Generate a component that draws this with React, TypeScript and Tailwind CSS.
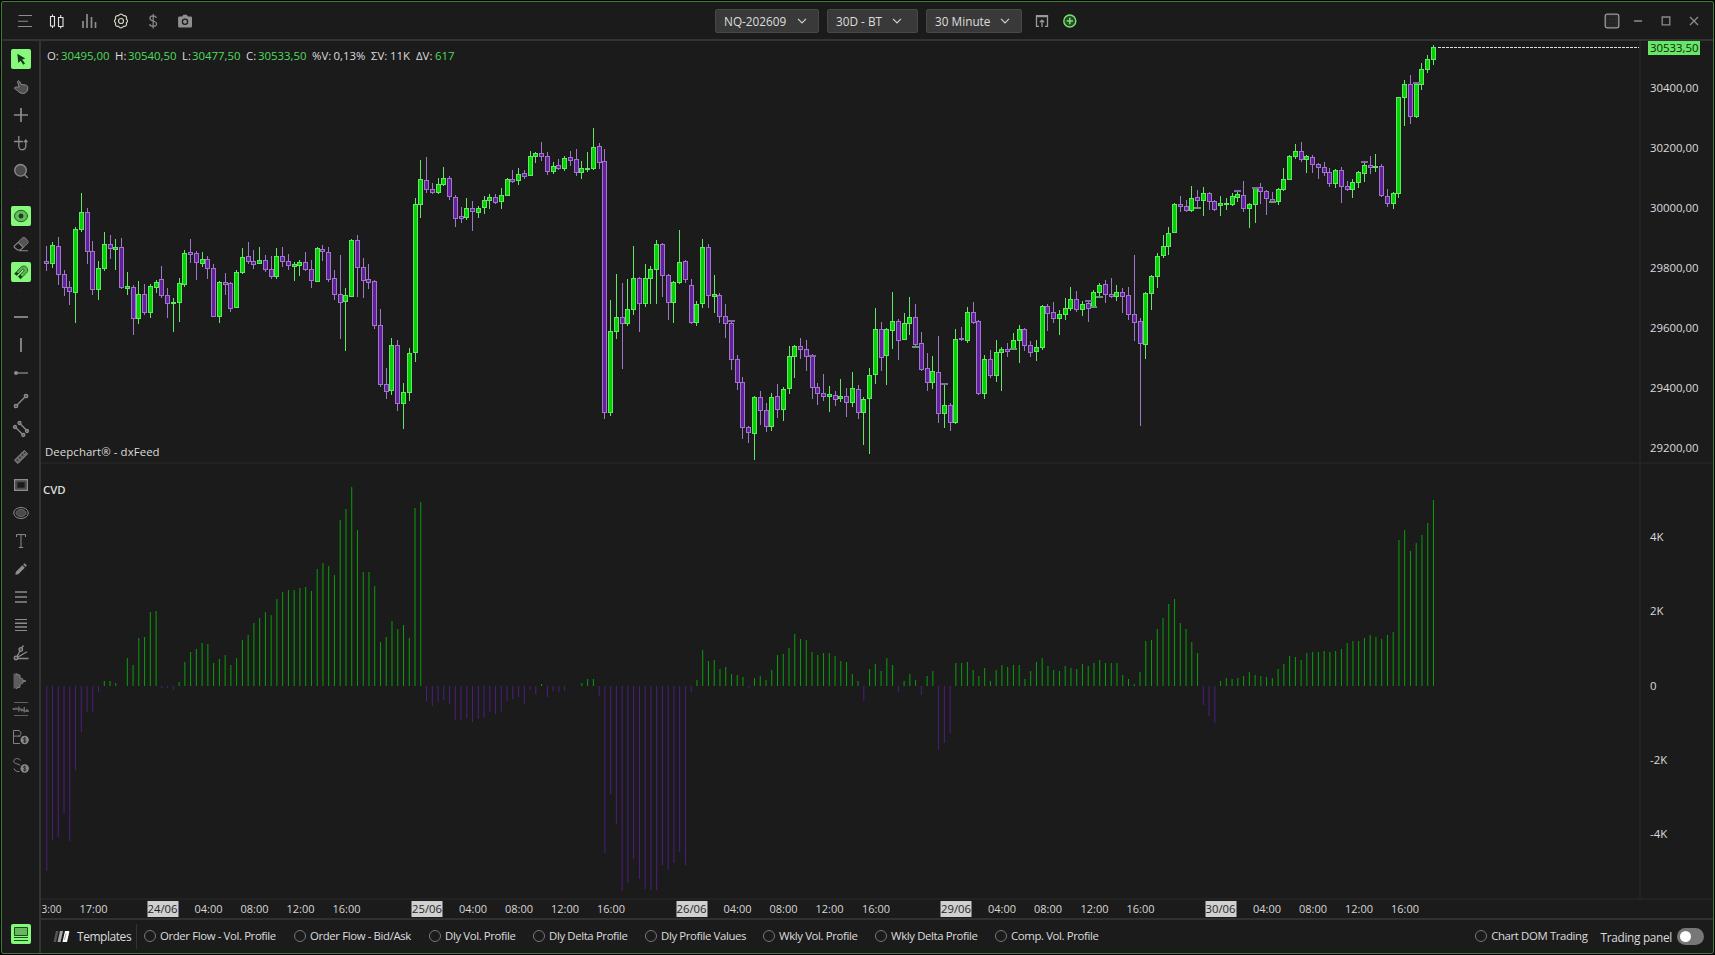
import type { ReactNode } from "react";

const FONT = '"Segoe UI", "Open Sans", "Noto Sans", sans-serif';
const BAR_START = 46.75;
const BAR_STEP = 5.754;
const CVD_ZERO = 686;

// direction, high, body top, body bottom, low (canvas units)
const CANDLES = `
p 246 261 264 271|g 242 245 264 268|p 237 246 275 285|p 270 274 288 296|p 281 287 292 305|g 227 229 293 323
g 193 212 230 232|p 208 212 252 264|p 241 251 290 295|g 261 268 290 300|g 232 244 269 271|p 235 244 249 259
g 239 247 250 270|p 238 247 288 289|g 272 286 289 295|p 285 287 319 335|g 281 294 319 324|p 284 294 313 315
g 284 286 313 318|g 280 282 288 293|p 266 279 296 298|p 288 295 304 318|g 298 302 304 332|g 278 283 303 322
g 250 253 285 287|p 239 252 255 263|p 251 253 263 280|g 252 259 264 267|p 256 259 269 279|p 264 268 317 317
g 281 282 317 323|p 273 282 285 295|p 282 283 309 312|g 270 272 308 308|g 248 257 273 274|p 242 256 262 264
p 250 261 265 269|g 247 260 264 264|p 255 260 270 272|p 256 269 277 279|g 248 256 277 279|p 247 256 262 267
p 254 261 266 270|g 262 264 267 281|g 260 262 266 276|p 252 262 270 271|p 260 269 281 288|g 247 248 282 282
p 245 249 252 261|p 247 252 280 282|p 270 278 295 300|p 255 294 303 339|g 288 295 302 351|g 239 240 297 297
p 235 240 268 297|p 258 267 281 298|p 264 279 283 289|p 280 281 326 329|p 309 325 385 387|p 368 384 392 399
g 338 345 391 395|p 340 345 404 411|g 383 392 404 429|g 348 353 393 401|g 198 204 353 362|g 160 179 205 218
p 157 180 190 193|p 183 189 193 194|g 178 184 193 194|g 167 178 185 186|p 176 178 197 200|p 195 197 219 227
p 207 216 219 223|g 198 208 218 220|p 201 208 212 231|g 206 208 213 218|g 196 200 208 214|g 194 197 201 209
p 194 197 203 204|g 188 195 202 209|g 178 179 196 196|p 170 179 182 183|g 168 174 181 185|p 170 173 177 179
g 151 156 176 176|g 152 153 157 163|p 142 153 157 161|p 152 156 172 175|g 162 166 172 174|p 159 165 169 170
g 156 158 169 171|p 151 157 161 166|p 149 159 173 176|g 161 168 173 179|g 152 168 170 172|g 128 147 169 170
p 143 146 163 169|p 149 161 413 419|g 300 331 413 416|g 274 317 332 339|p 283 317 324 369|g 279 309 324 326
g 246 278 310 315|p 277 278 304 332|g 264 278 304 307|g 266 269 279 304|g 240 244 270 304|p 243 244 276 297
p 274 275 303 320|g 281 282 303 323|g 230 262 283 284|p 260 261 280 283|p 279 285 323 324|g 301 304 323 326
g 239 247 304 308|p 244 247 296 308|g 275 294 297 313|p 293 295 317 323|p 304 316 324 338|p 320 323 360 370
p 355 359 383 390|p 377 382 428 439|p 426 427 433 443|g 396 397 434 460|p 391 397 411 425|p 403 410 427 432
g 393 397 427 431|p 384 396 410 418|g 387 389 410 421|g 346 356 389 394|g 345 346 357 378|p 338 346 350 359
p 340 349 357 371|p 354 355 388 399|p 383 387 394 405|p 374 393 397 401|g 386 394 397 412|p 391 395 400 406
g 379 396 399 402|p 388 396 403 417|g 372 388 403 407|p 385 389 413 419|g 397 399 413 445|g 368 375 399 454
g 308 329 375 384|p 322 329 358 371|g 328 329 356 385|g 292 321 331 349|p 319 321 341 360|g 313 323 340 340
g 297 317 324 335|p 304 317 345 346|p 332 343 370 371|p 353 368 383 391|g 356 371 383 389|p 336 372 414 423
g 384 405 414 428|p 403 405 423 431|g 329 339 423 424|p 327 338 340 341|g 307 312 341 343|p 302 312 323 324
p 320 321 394 395|g 355 359 394 399|p 350 359 376 378|g 340 352 376 382|g 347 349 353 391|p 343 349 352 357
g 333 340 349 350|g 325 329 341 363|p 328 329 346 351|p 341 345 353 357|g 340 347 352 361|g 305 306 348 350
p 304 306 314 331|p 302 312 319 323|g 310 314 319 335|g 298 308 315 320|g 287 299 309 311|p 291 299 310 312
g 301 304 310 316|p 302 303 309 322|g 290 292 307 308|g 283 285 293 297|p 280 284 295 303|p 278 294 297 298
g 285 292 297 301|p 288 292 297 313|p 287 295 315 320|p 255 314 323 341|p 318 321 344 426|g 292 293 345 359
g 275 276 294 310|g 253 256 277 288|g 235 246 256 258|g 227 233 247 255|g 203 204 233 233|p 196 204 207 212
p 200 206 211 212|g 186 198 211 212|p 190 197 201 207|g 187 193 201 216|p 192 193 202 210|p 200 201 210 211
g 196 203 206 216|g 198 203 205 210|g 193 196 205 206|g 192 194 198 202|p 181 195 209 212|g 203 204 209 228
g 188 188 205 223|p 183 187 192 204|p 190 191 199 215|p 192 199 202 202|g 188 189 202 205|g 168 179 190 191
g 155 156 180 180|g 144 151 157 159|p 142 151 160 162|g 155 156 160 173|p 155 157 165 173|p 163 164 168 179
p 162 167 173 176|p 168 172 184 187|g 169 170 184 188|p 167 170 187 203|p 181 186 190 191|g 179 182 190 198
g 171 172 183 188|g 163 165 174 182|p 156 165 168 174|g 154 166 168 172|p 164 166 196 197|p 189 196 204 207
g 192 193 204 209|g 97 97 194 198|g 80 84 98 126|p 75 84 117 124|g 83 84 117 118|g 63 69 85 90
g 55 59 70 73|g 45 47 60 65`
  .trim()
  .split(/[|\n]/)
  .map((row) => {
    const [dir, ...rest] = row.split(" ");
    const [high, top, bottom, low] = rest.map(Number);
    return { up: dir === "g", high, top, bottom, low };
  });

// bar index, y, direction
const MARKERS: [number, number, string][] = [
  [119, 320, "p"], [133, 355, "p"], [151, 346, "g"], [156, 383, "p"], [168, 348, "g"],
  [181, 300, "p"], [182, 306, "g"], [183, 296, "g"], [200, 207, "g"], [207, 190, "p"],
  [210, 187, "p"], [213, 201, "g"], [229, 161, "p"], [238, 82, "p"],
];

const CVD = [
  871, 840, 837, 813, 841, 770, 732, 712, 712, 692, 681, 681, 683, 686, 658, 665, 638, 637, 612, 611,
  688, 688, 690, 682, 662, 652, 649, 643, 644, 663, 659, 655, 665, 658, 640, 635, 623, 618, 612, 615,
  599, 592, 590, 590, 588, 587, 591, 569, 563, 566, 575, 520, 509, 487, 530, 572, 572, 586, 642, 637,
  621, 629, 625, 638, 508, 502, 701, 706, 702, 700, 704, 720, 720, 718, 722, 719, 718, 712, 714, 712,
  701, 699, 697, 704, 690, 694, 684, 697, 691, 692, 691, 686, 686, 683, 679, 679, 696, 853, 794, 824,
  891, 883, 859, 879, 889, 890, 890, 865, 870, 863, 852, 865, 692, 680, 650, 661, 660, 669, 667, 674,
  675, 677, 688, 678, 676, 680, 670, 655, 654, 648, 634, 639, 640, 652, 655, 653, 653, 656, 661, 662,
  674, 681, 701, 669, 664, 671, 658, 665, 692, 681, 674, 680, 695, 676, 671, 750, 743, 733, 663, 663,
  662, 670, 676, 668, 681, 670, 665, 667, 665, 665, 679, 671, 662, 658, 666, 670, 671, 666, 668, 669,
  664, 666, 663, 660, 663, 663, 663, 675, 679, 684, 672, 641, 640, 629, 618, 604, 599, 623, 629, 642,
  653, 705, 716, 723, 681, 678, 679, 678, 676, 672, 675, 676, 677, 678, 669, 664, 656, 657, 660, 653,
  652, 652, 651, 652, 651, 649, 643, 641, 641, 638, 635, 637, 639, 635, 632, 540, 530, 551, 543, 535,
  523, 500,
];

const TIMES: [string, number][] = [
  ["3:00", 51], ["17:00", 93], ["24/06", 162], ["04:00", 208], ["08:00", 254], ["12:00", 300],
  ["16:00", 346], ["25/06", 426.5], ["04:00", 472.5], ["08:00", 518.5], ["12:00", 564.5],
  ["16:00", 610.5], ["26/06", 691], ["04:00", 737], ["08:00", 783], ["12:00", 829], ["16:00", 875.5],
  ["29/06", 955.5], ["04:00", 1001.5], ["08:00", 1047.5], ["12:00", 1094], ["16:00", 1140],
  ["30/06", 1220], ["04:00", 1266.5], ["08:00", 1312.5], ["12:00", 1358.5], ["16:00", 1404.5],
];

const QUOTES = [
  { label: "O:", value: "30495,00", width: "w-[68px]", gap: "w-[14px]", green: true },
  { label: "H:", value: "30540,50", width: "w-[67px]", gap: "w-[13px]", green: true },
  { label: "L:", value: "30477,50", width: "w-[64px]", gap: "w-[10px]", green: true },
  { label: "C:", value: "30533,50", width: "w-[66px]", gap: "w-[12px]", green: true },
  { label: "%V:", value: "0,13%", width: "w-[59px]", gap: "w-[21.500px]", green: false },
  { label: "ΣV:", value: "11K", width: "w-[45px]", gap: "w-[19px]", green: false },
  { label: "ΔV:", value: "617", width: "w-[60px]", gap: "w-[19px]", green: true },
];

const TEMPLATES = [
  { name: "Order Flow - Vol. Profile", width: "w-[150px]" },
  { name: "Order Flow - Bid/Ask", width: "w-[135px]" },
  { name: "Dly Vol. Profile", width: "w-[104px]" },
  { name: "Dly Delta Profile", width: "w-[112px]" },
  { name: "Dly Profile Values", width: "w-[118px]" },
  { name: "Wkly Vol. Profile", width: "w-[112px]" },
  { name: "Wkly Delta Profile", width: "w-[120px]" },
  { name: "Comp. Vol. Profile", width: "w-[110px]" },
];

const barX = (index: number) => BAR_START + BAR_STEP * index;

const Icon = ({ children, className = "" }: { children: ReactNode; className?: string }) => (
  <svg
    viewBox="0 0 20 20"
    className={`size-5 shrink-0 ${className}`}
    fill="none"
    stroke="#8c8c8c"
    strokeWidth="1.3"
  >
    {children}
  </svg>
);

const ToolButton = ({ active, children }: { active?: boolean; children: ReactNode }) => (
  <button type="button" className={`block size-5 rounded-[2px] ${active ? "bg-[#86f97b]" : ""}`}>
    <Icon>{children}</Icon>
  </button>
);

const Sidebar = () => (
  <aside className="flex w-[38px] shrink-0 flex-col items-center border-r-2 border-[#333] pt-2 pb-[9px]">
    <div className="flex flex-col gap-2">
      <ToolButton active>
        <path d="M6.3 4.8 14.3 9.4 11.2 10.6 14 14.6 12.3 15.7 9.6 11.7 7.3 14z" fill="#14361a" stroke="none" />
      </ToolButton>
      <ToolButton>
        <path
          d="M8.2 9.8 6.6 5.4c-.4-1.7 1.6-2.2 2.2-.7l1.4 2.8 4.2.5c1.7.2 2.4 1.1 2.4 2.7 0 3.5-1.5 5.6-4.6 5.7-2.8 0-4.2-.9-5.6-2.7L3.4 11.3c.2-1.3 1.9-1.5 2.8-1.2z"
          fill="#505050"
          strokeWidth="1"
        />
      </ToolButton>
      <ToolButton>
        <path d="M10 3v14M3 10h14" strokeWidth="1.7" />
      </ToolButton>
      <ToolButton>
        <path d="M3 8.5h9M7.8 3v10.2a3.5 3.5 0 0 0 7 0V9" />
        <path d="M12.2 9.3h5L14.8 6z" fill="#8c8c8c" stroke="none" />
      </ToolButton>
      <ToolButton>
        <circle cx="9.5" cy="9.3" r="5.8" fill="#4a4a4a" />
        <path d="m13.6 13.7 3.2 3.3" />
      </ToolButton>
    </div>

    <i className="my-2 h-px w-0.5 bg-[#262626]" />

    <div className="mt-2 flex flex-col gap-2">
      <ToolButton active>
        <ellipse cx="10" cy="10" rx="6.5" ry="5.7" fill="#66b85c" stroke="#235a25" strokeWidth="1" />
        <circle cx="10" cy="10" r="2" stroke="#143d18" strokeWidth="1" fill="#143d18" />
      </ToolButton>
      <ToolButton>
        <path d="m3.2 12.2 8.6-8.4q1-.7 2 .2l3 3q.8 1-.1 1.900L9.5 16H6.4l-3.2-2.800z" strokeWidth="1.1" />
        <path d="m7.3 8.2 4.7-4.500 1.500.1 3.500 3.500-.1 1.400-4.600 4.500z" fill="#555" stroke="none" />
        <path d="m7.2 8.3 5 5M8 16.700h9" strokeWidth="1.1" />
      </ToolButton>
      <ToolButton active>
        <path
          d="m3.700 11.800 5.700-6.200c4.200-4.300 10 1.200 6 5.500l-5.900 5.700-2.200-2.300 5.400-5.400c1.100-1.300-.3-2.500-1.400-1.500L6 13.200z"
          fill="#5fb356"
          stroke="#235a25"
          strokeWidth=".9"
        />
        <path d="m3.600 11.800 1.700-1.900 2.100 1.700-1.700 1.900zM7.400 14.500l1.800-1.800 2.100 2-1.900 2z" fill="#14361a" stroke="none" />
      </ToolButton>
    </div>

    <i className="my-2 h-px w-0.5 bg-[#262626]" />

    <div className="mt-2 flex flex-col gap-2">
      <ToolButton>
        <path d="M3 10h14" strokeWidth="1.8" />
      </ToolButton>
      <ToolButton>
        <path d="M10 3v14" strokeWidth="1.8" />
      </ToolButton>
      <ToolButton>
        <path d="M5 10h12" />
        <circle cx="5" cy="10" r="2" fill="#8c8c8c" stroke="none" />
      </ToolButton>
      <ToolButton>
        <path d="m6.3 13.7 7.4-7.4" />
        <circle cx="5" cy="15" r="1.7" fill="#555" />
        <circle cx="15" cy="5" r="1.7" fill="#555" />
      </ToolButton>
      <ToolButton>
        <path d="m9.7 5.2 5.3 5.500M5.2 9l6 6" />
        <circle cx="8.5" cy="4" r="1.5" fill="#555" />
        <circle cx="16" cy="12" r="1.5" fill="#555" />
        <circle cx="4" cy="8" r="1.5" fill="#555" />
        <circle cx="12.3" cy="16" r="1.5" fill="#555" />
      </ToolButton>
      <ToolButton>
        <path d="m3.500 13.200 9.700-9.700 3.400 3.300-9.700 9.700z" fill="#666" strokeWidth="1" />
        <path d="m5.900 12.600 1 1M8.500 10l1 1M11 7.500l1 1M13.400 5.200l1 1" stroke="#222" strokeWidth="1.2" />
      </ToolButton>
      <ToolButton>
        <path d="M3.700 4.700h12.600v10.600H3.700z" fill="#2b2b2b" strokeWidth="1.4" />
        <path d="M5.700 6.700h8.600v6.600H5.700z" stroke="#4d4d4d" fill="#1b1b1b" />
      </ToolButton>
      <ToolButton>
        <ellipse cx="10" cy="10" rx="7.300" ry="5.500" strokeWidth="1" />
        <ellipse cx="10" cy="10" rx="5" ry="3.500" fill="#4a4a4a" stroke="#666" strokeWidth="1" />
      </ToolButton>
      <ToolButton>
        <path d="M5.500 6V3.600h9V6M10 3.600v12.800M7.800 16.500h4.400" strokeWidth="1" />
      </ToolButton>
      <ToolButton>
        <path
          d="m4.300 15.800.6-3 6.500-6.500 2.400 2.400-6.500 6.500zM12.200 5.500l1.300-1.300 2.400 2.400-1.300 1.300z"
          fill="#8c8c8c"
          stroke="none"
        />
      </ToolButton>
      <ToolButton>
        <path d="M4 5h12M4 10h12M4 15h12" strokeWidth="1.7" />
      </ToolButton>
      <ToolButton>
        <path d="M4 4.500h12M4 15.500h12" strokeWidth="1" />
        <path d="M4 8.200h12M4 12h12" strokeWidth="1.6" />
      </ToolButton>
      <ToolButton>
        <path d="m6 13.500 3.200-6M10.500 5l2-2.500M6.500 14.200l9.500-5.500M6.500 15.500h11" />
        <circle cx="9.8" cy="6.5" r="1.8" fill="#444" />
        <circle cx="5" cy="15" r="1.8" fill="#444" />
      </ToolButton>
      <ToolButton>
        <path d="M2.500 2.500h4l2.500 2v2.300l2.500 1.700 3.500 1.500-3.500 1.700L9 13.200v2.600l-2.500 1.700h-4z" fill="#5d5d5d" stroke="none" />
        <path d="m5 2.500 1.500 1.300L9 4v3l2.500.500.5 2 3 .6-3 .6-.5 2-2.500.6v3l-2.500.3L5 18" strokeWidth=".8" />
      </ToolButton>
      <ToolButton>
        <path d="M3 3.500h14M3 16.500h14" stroke="#606060" strokeWidth="1" />
        <path
          d="M2.500 9v2M5 8.500v2M7.700 7.500v5M10.500 9.500v3M13.300 8v5.500M16 10v3M2 10h5l3.500.5 3 1.500H18"
          stroke="#6b6b6b"
          strokeWidth="1.5"
        />
      </ToolButton>
      <ToolButton>
        <path d="M9 16.500H2.500v-13H7c4 0 4 5.600 0 5.600H2.500M7 9.100h2.500" strokeWidth=".9" />
        <circle cx="13.700" cy="13" r="4.200" fill="#8c8c8c" stroke="none" />
        <path d="M15.300 11.500c-1.500-1-3.200-.6-3.200.4 0 1.300 3.200.8 3.200 2.200 0 1-1.800 1.300-3.400.3M13.700 10.200v5.800" stroke="#222" strokeWidth=".8" />
      </ToolButton>
      <ToolButton>
        <path d="M9.500 5.500C8 2.500 2.800 3 2.800 6.300S9 8.600 9 10.500M3 13.500c.7 2.500 3.300 3.500 5.500 2.800" strokeWidth=".9" />
        <circle cx="13.700" cy="13.500" r="4.200" fill="#8c8c8c" stroke="none" />
        <path d="M15.300 12c-1.500-1-3.200-.6-3.200.4 0 1.300 3.200.8 3.200 2.200 0 1-1.800 1.300-3.400.3M13.700 10.700v5.800" stroke="#222" strokeWidth=".8" />
      </ToolButton>
    </div>

    <div className="mt-auto">
      <ToolButton active>
        <path d="M3.500 3.500h13v8h-13z" fill="#66b85c" stroke="#1b4a1e" strokeWidth="1" />
        <path d="M3 13.500h14M3 16.500h14" stroke="#1b4a1e" strokeWidth="1" />
      </ToolButton>
    </div>
  </aside>
);

const Dropdown = ({ label, className }: { label: string; className: string }) => (
  <button
    type="button"
    className={`flex h-6 shrink-0 items-center justify-between rounded-[2px] border border-[#474747] bg-[#393939] pl-[8px] text-[11.800px] text-[#dedede] ${className}`}
  >
    <span className="whitespace-nowrap">{label}</span>
    <svg viewBox="0 0 10 6" className="h-[6px] w-[10px]" fill="none" stroke="#d0d0d0" strokeWidth="1.2">
      <path d="m1 .8 4 4 4-4" />
    </svg>
  </button>
);

const Header = () => (
  <header className="flex h-[39px] shrink-0 items-center border-b-2 border-[#333] pt-px pr-[9px] pl-[12px]">
    <div className="flex w-[700px] shrink-0 gap-3">
      <Icon>
        <path d="M3.500 4.500h13.500M3 10.200h10M3 15.500h14" strokeWidth="1.1" />
      </Icon>
      <Icon>
        <g stroke="#e4e4e4" strokeWidth="1.1">
          <path d="M3.500 5.500h4v9.500h-4zM11.500 6.500h4.500v9h-4.500zM5.500 3.500v2M5.500 15v2M13.700 4v2.500M13.700 15.500v2" />
        </g>
      </Icon>
      <Icon>
        <path d="M4 10v7M8 3v14M12.500 6v11M16.500 11v6" strokeWidth="1.7" />
      </Icon>
      <Icon>
        <g stroke="#d3d3c5" strokeWidth="1.2">
          <path d="M7.500 4.600Q10 1.700 12.500 4.600 16.300 4.400 15.400 8 17.600 10 15.400 12 16.300 15.600 12.500 15.400 10 18.300 7.500 15.400 3.700 15.600 4.600 12 2.400 10 4.600 8 3.700 4.400 7.500 4.600z" />
          <circle cx="10" cy="10" r="2.5" />
        </g>
      </Icon>
      <Icon>
        <path d="M13.500 6.800C12.500 4.200 6.900 4 6.900 7.200c0 3.400 6.700 2.200 6.700 5.700 0 3.300-6.300 3-7.100.2M10.200 3v14.500" strokeWidth="1.2" />
      </Icon>
      <Icon>
        <path
          d="M4.500 5.500h2.700L8.300 3.800h3.500l1.100 1.700h2.800q1.300 0 1.300 1.300v8.400q0 1.300-1.300 1.300H4.400q-1.300 0-1.300-1.300V6.800q0-1.300 1.400-1.300z"
          fill="#8f8f8f"
          stroke="none"
        />
        <circle cx="10" cy="10.800" r="2.600" stroke="#1b1b1b" strokeWidth="1.3" fill="#8f8f8f" />
      </Icon>
    </div>

    <Dropdown label="NQ-202609" className="w-[104px] pr-[11px]" />
    <Dropdown label="30D - BT" className="ml-2 w-[91px] pr-[15px]" />
    <Dropdown label="30 Minute" className="ml-2 w-[96px] pr-[11px]" />

    <Icon className="ml-[10px]">
      <path d="M7 15.300H4.500V4.700h11v10.600H13" stroke="#9a9a9a" />
      <path d="M4.500 5.500h11M10 16V9.500M7.800 11.300 10 9.100l2.200 2.200" stroke="#9a9a9a" />
    </Icon>
    <Icon className="ml-[8px]">
      <circle cx="9.800" cy="10" r="6" stroke="#74e56c" fill="#2c4a2b" strokeWidth="1.4" />
      <path d="M9.800 6.800v6.400M6.600 10H13" stroke="#74e56c" strokeWidth="1.5" />
    </Icon>

    <div className="ml-auto flex gap-2">
      <Icon className="-mr-0.5">
        <rect x="3.200" y="3.200" width="13.600" height="13.600" rx="2" fill="#2a2a2a" stroke="#9a9a9a" />
        <path d="M5.500 6.500h9M5.500 10h9M5.500 13.500h9" stroke="#1c1c1c" strokeDasharray="1.5 1.5" />
      </Icon>
      <Icon>
        <path d="M6 10h8" strokeWidth="1.5" />
      </Icon>
      <Icon>
        <path d="M6.200 6h7.600v7.800H6.200z" strokeWidth="1.3" />
      </Icon>
      <Icon>
        <path d="m6 6 8 8M14 6l-8 8" strokeWidth="1.3" />
      </Icon>
    </div>
  </header>
);

const PriceChart = () => (
  <svg viewBox="41 41 1598 421" className="block h-[421px] w-[1598px]" shapeRendering="crispEdges">
    {CANDLES.map((candle, index) => {
      const x = Math.floor(barX(index));
      const line = candle.up ? "#63e663" : "#a077c8";
      const fill = candle.up ? "#02d202" : "#61219c";
      const height = candle.bottom - candle.top;

      return (
        <g key={index}>
          <rect x={x} y={candle.high} width={1} height={candle.low - candle.high} fill={line} />
          <rect x={x - 2} y={candle.top} width={5} height={height} fill={line} />
          {height > 2 && (
            <rect x={x - 1} y={candle.top + 1} width={3} height={height - 2} fill={fill} />
          )}
        </g>
      );
    })}
    {MARKERS.map(([index, y, dir]) => (
      <rect
        key={index}
        x={Math.floor(barX(index)) - 3}
        y={y}
        width={7}
        height={2}
        fill={dir === "g" ? "#5fa068" : "#8767a8"}
      />
    ))}
    <path d="M1438 47.500h201" stroke="#dcdcdc" strokeWidth={1} strokeDasharray="3 1" />
  </svg>
);

const CvdChart = () => (
  <svg viewBox="41 464 1598 434" className="block h-[434px] w-[1598px]">
    {CVD.map((end, index) => (
      <rect
        key={index}
        x={barX(index) - 0.5}
        y={Math.min(end, CVD_ZERO)}
        width={1}
        height={Math.abs(end - CVD_ZERO)}
        fill={end < CVD_ZERO ? "#07a007" : "#4f1d82"}
      />
    ))}
  </svg>
);

const TimeAxis = () => (
  <svg viewBox="41 900 1671 18" className="block h-[18px] w-full" fontSize="11.5">
    {TIMES.map(([label, x]) => {
      const isDate = label.includes("/");
      const width = isDate ? 30 : label.length * 5.6 - (label.length === 4 ? 2.6 : 0);

      return (
        <g key={x}>
          {isDate && <rect x={Math.round(x - 15.5)} y={901} width={31} height={16} fill="#d0d0d0" />}
          <text
            x={x - width / 2}
            y={913}
            textLength={width}
            lengthAdjust="spacingAndGlyphs"
            fill={isDate ? "#1f1f1f" : "#d8d8d8"}
          >
            {label}
          </text>
        </g>
      );
    })}
  </svg>
);

const Radio = ({ name, className = "" }: { name: string; className?: string }) => (
  <label className={`flex shrink-0 items-center gap-1 whitespace-nowrap tracking-[-0.380px] ${className}`}>
    <span className="size-3 shrink-0 rounded-full border border-[#777]" />
    <span>{name}</span>
  </label>
);

const Footer = () => (
  <footer className="flex h-[35px] items-center border-t-2 border-[#303030] pr-[9px] pb-px pl-3">
    <svg viewBox="0 0 17 13" className="h-[13px] w-[17px]">
      <path d="M3 1h2.500L3 12H.5z" fill="#555" />
      <path d="M7 1h3L7.500 12h-3z" fill="#a5a5a5" />
      <path d="M12 1h3.500q1 0 .8 1L14 12H9.500z" fill="#fff" />
      <path d="M12.500 3.500h1L12 10h-1z" fill="#aaa" />
    </svg>
    <span className="ml-[7px] w-[59px] pt-px text-[12px] tracking-[-0.450px]">Templates</span>
    <span className="mr-[7px] h-[25px] w-px bg-[#333]" />
    {TEMPLATES.map((item) => (
      <Radio key={item.name} name={item.name} className={item.width} />
    ))}
    <Radio name="Chart DOM Trading" className="ml-auto" />
    <span className="ml-[13px] pt-px text-[11.800px] tracking-[-0.300px] whitespace-nowrap">Trading panel</span>
    <button type="button" className="ml-[5px] flex h-[17px] w-[27px] items-center rounded-full bg-[#777] px-[3px]">
      <span className="size-[11px] rounded-full bg-white" />
    </button>
  </footer>
);

const App = () => (
  <div
    className="h-[955px] w-[1715px] overflow-hidden bg-black p-px text-[11.400px] leading-4 text-[#dcdcdc]"
    style={{ fontFamily: FONT }}
  >
    <div className="flex h-full flex-col rounded-[2px] border border-[#3f7d37] bg-[#1b1b1b] pl-px">
      <Header />
      <div className="flex min-h-0 flex-1">
        <Sidebar />
        <main className="flex min-w-0 flex-1 flex-col">
          <section className="flex h-[421px]">
            <div className="relative w-[1598px] shrink-0">
              <PriceChart />
              <div className="absolute top-[7px] left-[6px] flex">
                {QUOTES.map((quote) => (
                  <div key={quote.label} className={`flex whitespace-nowrap ${quote.width}`}>
                    <span className={`shrink-0 ${quote.gap}`}>{quote.label}</span>
                    <span className={quote.green ? "text-[#50dc5c]" : ""}>{quote.value}</span>
                  </div>
                ))}
              </div>
              <p className="absolute bottom-[2px] left-[4px] tracking-[0.080px]">Deepchart® - dxFeed</p>
            </div>
            <div className="w-[72px] border-l-2 border-[#232323] pl-[7px]">
              <p className="h-[14px] w-[52px] bg-[#66e866] pl-[2px] leading-[14px] text-[#10240f]">30533,50</p>
              <div className="mt-[23px] flex flex-col gap-10 pl-[2px] leading-5">
                {["30400,00", "30200,00", "30000,00", "29800,00", "29600,00", "29400,00", "29200,00"].map(
                  (price) => (
                    <span key={price}>{price}</span>
                  ),
                )}
              </div>
            </div>
          </section>

          <section className="flex h-[438px] border-y-2 border-[#222]">
            <div className="relative w-[1598px] shrink-0">
              <CvdChart />
              <h2 className="absolute top-[18px] left-[2px] font-semibold">CVD</h2>
            </div>
            <div className="flex w-[72px] flex-col gap-[54.300px] border-l-2 border-[#232323] pt-[63px] pl-[9px] leading-5">
              {["4K", "2K", "0", "-2K", "-4K"].map((level) => (
                <span key={level}>{level}</span>
              ))}
            </div>
          </section>

          <TimeAxis />
          <Footer />
        </main>
      </div>
    </div>
  </div>
);

export default App;
